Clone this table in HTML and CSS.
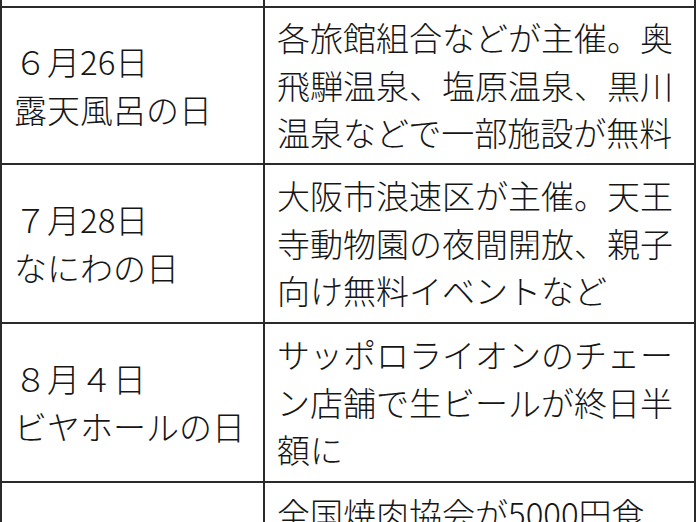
FILE: index.html
```html
<!DOCTYPE html>
<html lang="ja">
<head>
<meta charset="utf-8">
<title>記念日</title>
<link rel="stylesheet" href="styles.css">
</head>
<body>
<div class="table">
  <div class="cell cell-left"></div>
  <div class="cell cell-right"></div>

  <div class="cell cell-left"><p>６月26日<br>露天風呂の日</p></div>
  <div class="cell cell-right"><p>各旅館組合などが主催。奥<br>飛騨温泉、塩原温泉、黒川<br>温泉などで一部施設が無料</p></div>

  <div class="cell cell-left"><p>７月28日<br>なにわの日</p></div>
  <div class="cell cell-right"><p>大阪市浪速区が主催。天王<br>寺動物園の夜間開放、親子<br>向け無料イベントなど</p></div>

  <div class="cell cell-left"><p>８月４日<br>ビヤホールの日</p></div>
  <div class="cell cell-right"><p>サッポロライオンのチェー<br>ン店舗で生ビールが終日半<br>額に</p></div>

  <div class="cell cell-left"><p>８月29日<br>焼き肉の日</p></div>
  <div class="cell cell-right"><p>全国焼肉協会が5000円食<br>事券などが当たるキャン<br>ペーンを実施</p></div>
</div>
</body>
</html>
```

FILE: styles.css
```css
html, body {
  margin: 0;
  padding: 0;
  background: #ffffff;
  overflow: hidden;
}

.table {
  display: grid;
  grid-template-columns: 263px 431px;
  grid-template-rows: 8px 157px repeat(3, 159px);
  width: 694px;
  border-left: 2px solid #2a2a2a;
  font-family: "Noto Sans CJK JP", "Noto Sans", sans-serif;
  font-weight: 300;
  font-size: 33px;
  line-height: 47.5px;
  color: #161616;
}

.cell {
  display: flex;
  flex-direction: column;
  justify-content: center;
  border-right: 2px solid #2a2a2a;
  border-bottom: 2px solid #2a2a2a;
  overflow: hidden;
}

.cell p {
  margin: 0;
  white-space: nowrap;
}

.cell-left {
  padding-left: 12px;
}

.cell-right {
  padding-left: 12px;
}
```
